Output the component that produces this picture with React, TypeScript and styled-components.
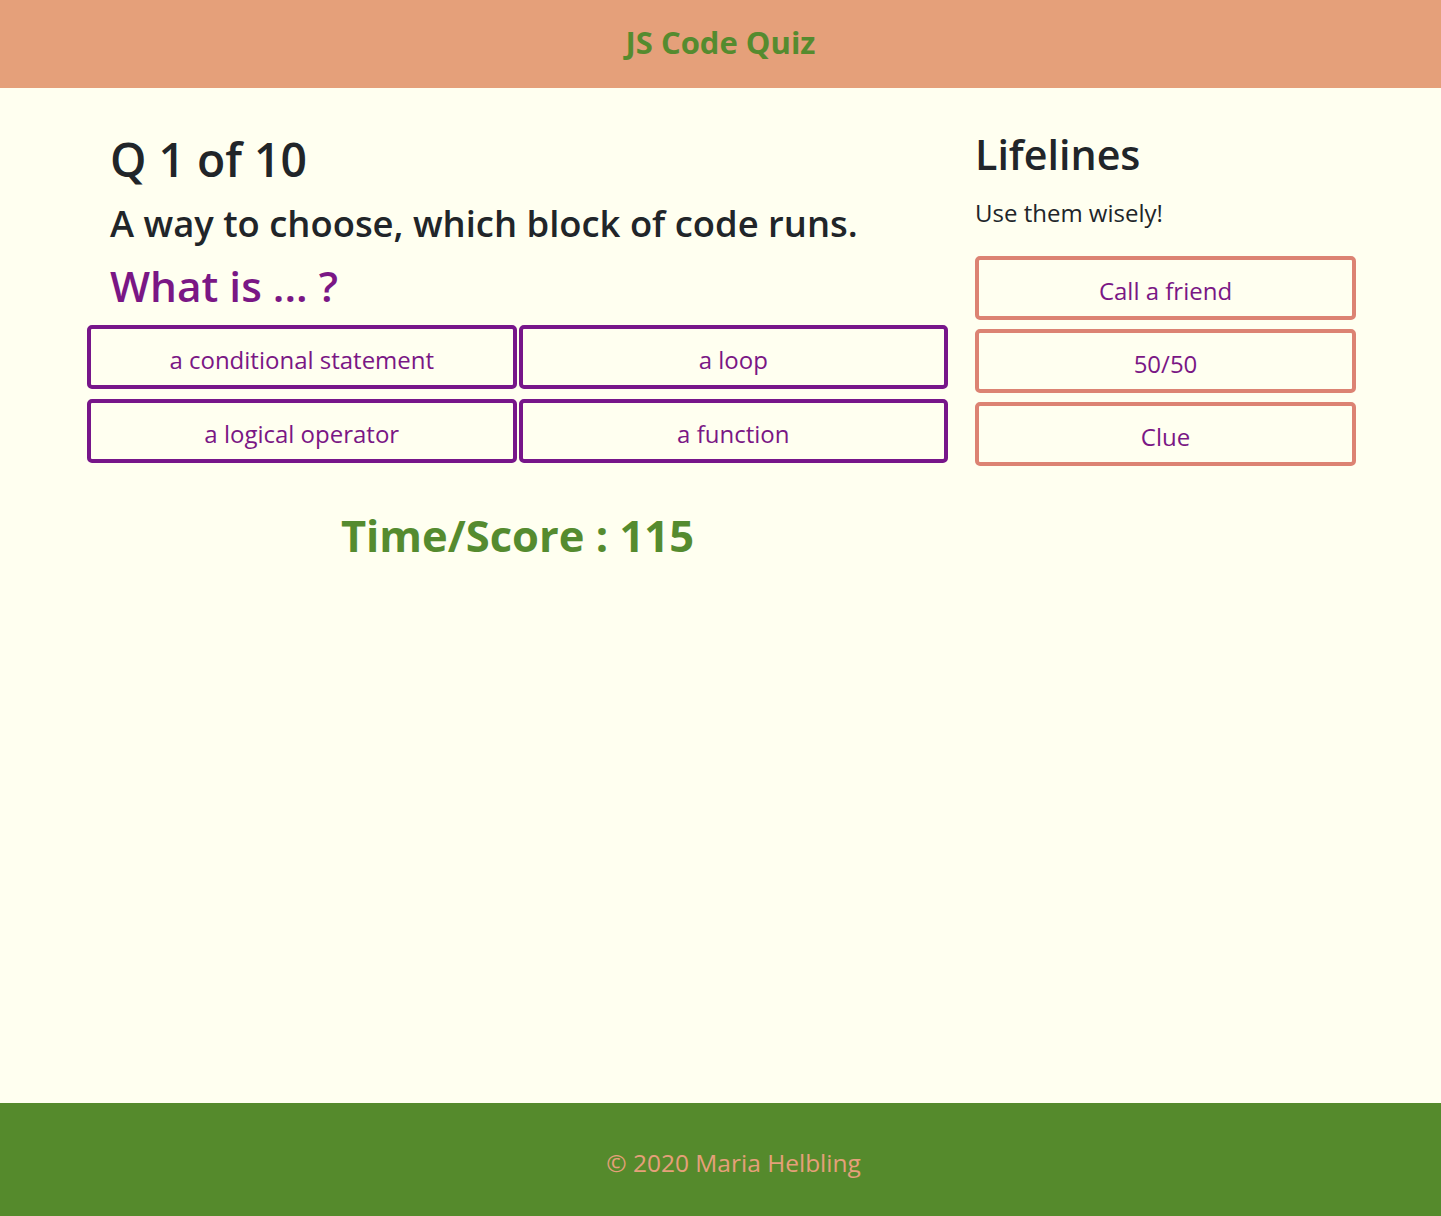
import { styled, createGlobalStyle } from "styled-components";

const GlobalStyle = createGlobalStyle`
  html, body {
    margin: 0;
    padding: 0;
    background-color: #fffff0;
    font-family: "Open Sans", "Noto Sans", sans-serif;
    color: #212529;
  }
`;

const answers = [
  "a conditional statement",
  "a loop",
  "a logical operator",
  "a function",
];

const lifelines = ["Call a friend", "50/50", "Clue"];

const App = () => {
  return (
    <>
      <GlobalStyle />
      <Page>
        <Header>
          <Brand>JS Code Quiz</Brand>
        </Header>
        <Main>
          <QuizColumn>
            <QuestionBlock>
              <QuestionCount>Q 1 of 10</QuestionCount>
              <QuestionText>A way to choose, which block of code runs.</QuestionText>
              <Prompt>What is ... ?</Prompt>
            </QuestionBlock>
            <AnswerGrid>
              {answers.map((a) => (
                <AnswerButton key={a}>{a}</AnswerButton>
              ))}
            </AnswerGrid>
            <Score>Time/Score : 115</Score>
          </QuizColumn>
          <LifelineColumn>
            <LifelineTitle>Lifelines</LifelineTitle>
            <LifelineHint>Use them wisely!</LifelineHint>
            <LifelineList>
              {lifelines.map((l) => (
                <LifelineButton key={l}>{l}</LifelineButton>
              ))}
            </LifelineList>
          </LifelineColumn>
        </Main>
        <Footer>© 2020 Maria Helbling</Footer>
      </Page>
    </>
  );
};

const Page = styled.div`
  display: flex;
  flex-direction: column;
  min-height: 1216px;
`;

const Header = styled.header`
  height: 88px;
  background-color: #e5a07a;
  display: flex;
  align-items: center;
  justify-content: center;
`;

const Brand = styled.h1`
  margin: 0;
  color: #558b2f;
  font-size: 31px;
  font-weight: 700;
  line-height: 1;
  padding-bottom: 3px;
`;

const Main = styled.main`
  flex: 1;
  display: flex;
  gap: 27px;
  padding: 40px 0 0 87px;
`;

const QuizColumn = styled.section`
  width: 861px;
  display: flex;
  flex-direction: column;
`;

const QuestionBlock = styled.div`
  padding-left: 23px;
  margin-bottom: 8px;
`;

const QuestionCount = styled.h2`
  margin: 0;
  font-size: 46.3px;
  font-weight: 600;
  line-height: 64px;
`;

const QuestionText = styled.h3`
  margin: 0;
  font-size: 36.4px;
  font-weight: 600;
  line-height: 63px;
`;

const Prompt = styled.h3`
  margin: 0;
  color: #7a1785;
  font-size: 42.4px;
  font-weight: 600;
  line-height: 62px;
`;

const AnswerGrid = styled.div`
  display: grid;
  grid-template-columns: 1fr 1fr;
  column-gap: 2px;
  row-gap: 10px;
`;

const OutlineButton = styled.button`
  height: 64px;
  background: transparent;
  border-radius: 5px;
  border-width: 4px;
  border-style: solid;
  color: #7a1785;
  font-family: "Open Sans", "Noto Sans", sans-serif;
  font-size: 24px;
  cursor: pointer;
  padding: 4px 12px 0;
`;

const AnswerButton = styled(OutlineButton)`
  border-color: #77168a;
`;

const Score = styled.div`
  margin-top: 45px;
  text-align: center;
  color: #558b2f;
  font-size: 43.5px;
  font-weight: 700;
  line-height: 56px;
`;

const LifelineColumn = styled.aside`
  width: 381px;
  display: flex;
  flex-direction: column;
`;

const LifelineTitle = styled.h2`
  margin: 0;
  font-size: 41.2px;
  font-weight: 600;
  line-height: 52px;
`;

const LifelineHint = styled.p`
  margin: 0 0 11px;
  font-size: 24px;
  line-height: 65px;
`;

const LifelineList = styled.div`
  display: flex;
  flex-direction: column;
  gap: 9px;
`;

const LifelineButton = styled(OutlineButton)`
  border-color: #dc8373;
`;

const Footer = styled.footer`
  height: 113px;
  background-color: #558a2c;
  color: #e5a07a;
  font-size: 24.5px;
  display: flex;
  align-items: center;
  justify-content: center;
  padding: 6px 0 0 26px;
  box-sizing: border-box;
`;

export default App;
